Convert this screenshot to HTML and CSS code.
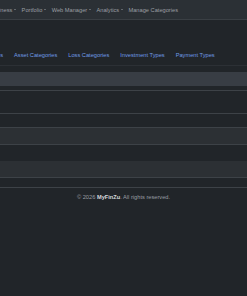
FILE: index.html
```html
<!DOCTYPE html>
<html lang="en">
<head>
  <meta charset="UTF-8">
  <meta name="viewport" content="width=device-width, initial-scale=1">
  <title>MyFinZu - Manage Categories</title>
  <link rel="stylesheet" href="styles.css">
</head>
<body>
  <nav class="topbar">
    <ul class="menu">
      <li><a href="#" class="drop">Business</a></li>
      <li><a href="#" class="drop">Portfolio</a></li>
      <li><a href="#" class="drop">Web Manager</a></li>
      <li><a href="#" class="drop">Analytics</a></li>
      <li><a href="#">Manage Categories</a></li>
    </ul>
  </nav>

  <main class="content">
    <ul class="tabs">
      <li><a href="#">Expense Categories</a></li>
      <li><a href="#">Asset Categories</a></li>
      <li><a href="#">Loss Categories</a></li>
      <li><a href="#">Investment Types</a></li>
      <li><a href="#">Payment Types</a></li>
    </ul>

    <div class="grid">
      <div class="grid-head"></div>
      <div class="grid-row tall"></div>
      <div class="grid-row short"></div>
      <div class="grid-row odd"></div>
      <div class="grid-row plain"></div>
      <div class="grid-row odd"></div>
      <div class="grid-row tiny"></div>
    </div>
  </main>

  <footer class="footer">
    &copy; 2026 <strong>MyFinZu</strong>. All rights reserved.
  </footer>
</body>
</html>
```

FILE: styles.css
```css
:root {
  --bg-color: #212529;
  --bar-bg: #2b3035;
  --head-bg: #383d44;
  --stripe-bg: #2c3034;
  --line-color: #3d4247;
  --muted: #9a9ea3;
  --link: #6f9be6;
}
* { box-sizing: border-box; }
html, body {
  margin: 0;
  padding: 0;
  background-color: var(--bg-color);
  overflow: hidden;
}
body {
  font-family: "Liberation Sans", Arial, sans-serif;
  font-size: 5.68px;
  line-height: 8px;
  color: var(--muted);
}
a { text-decoration: none; }
ul {
  list-style: none;
  margin: 0;
  padding: 0;
}

/* top navbar */
.topbar {
  height: 20px;
  background-color: var(--bar-bg);
  border-bottom: 1px solid #3a3f44;
  display: flex;
  align-items: center;
  overflow: hidden;
}
.menu {
  display: flex;
  margin-left: -13.6px;
  white-space: nowrap;
}
.menu a {
  display: flex;
  align-items: center;
  padding: 0 2.9px;
  color: var(--muted);
}
.menu a.drop::after {
  content: "";
  margin-left: 1.5px;
  border-top: 1.7px solid var(--muted);
  border-left: 1.3px solid transparent;
  border-right: 1.3px solid transparent;
}

/* tabs */
.tabs {
  display: flex;
  margin-top: 24px;
  margin-left: -53.5px;
  white-space: nowrap;
  border-bottom: 1px solid #2c3035;
}
.tabs a {
  display: block;
  padding: 6.5px 5.5px;
  color: var(--link);
}

/* table */
.grid {
  margin-top: 6px;
}
.grid-head {
  height: 14px;
  background-color: var(--head-bg);
  margin-bottom: 4px;
}
.grid-row { border-bottom: 1px solid var(--line-color); }
.grid-row.tall {
  height: 24px;
  border-top: 1px solid var(--line-color);
}
.grid-row.short { height: 14px; }
.grid-row.odd {
  height: 17px;
  background-color: var(--stripe-bg);
}
.grid-row.plain {
  height: 16px;
  border-bottom: none;
}
.grid-row.tiny { height: 10px; }

/* footer */
.footer {
  margin-top: 5px;
  text-align: center;
  color: var(--muted);
}
.footer strong {
  color: #d5d8db;
}
```
